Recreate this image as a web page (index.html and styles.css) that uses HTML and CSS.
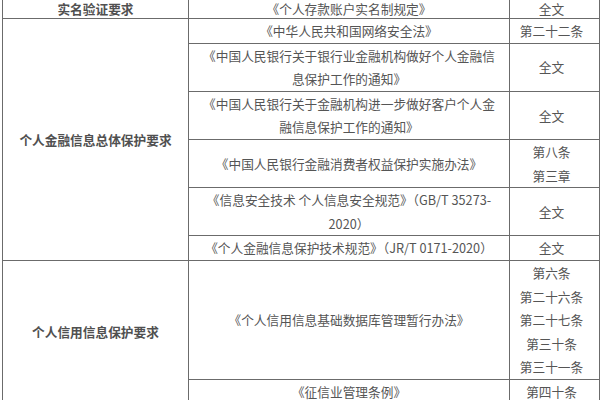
FILE: index.html
```html
<!DOCTYPE html>
<html lang="zh-CN">
<head>
<meta charset="utf-8">
<link rel="stylesheet" href="styles.css">
</head>
<body>
<table class="law-table">
  <colgroup>
    <col class="c-req">
    <col class="c-law">
    <col class="c-art">
  </colgroup>
  <tr class="first-row">
    <td class="req">实名验证要求</td>
    <td class="law">《个人存款账户实名制规定》</td>
    <td class="art">全文</td>
  </tr>
  <tr>
    <td class="req" rowspan="7">个人金融信息总体保护要求</td>
    <td class="law">《中华人民共和国网络安全法》</td>
    <td class="art">第二十二条</td>
  </tr>
  <tr>
    <td class="law">《中国人民银行关于银行业金融机构做好个人金融信<br>息保护工作的通知》</td>
    <td class="art">全文</td>
  </tr>
  <tr>
    <td class="law">《中国人民银行关于金融机构进一步做好客户个人金<br>融信息保护工作的通知》</td>
    <td class="art">全文</td>
  </tr>
  <tr>
    <td class="law">《中国人民银行金融消费者权益保护实施办法》</td>
    <td class="art">第八条<br>第三章</td>
  </tr>
  <tr>
    <td class="law">《信息安全技术 个人信息安全规范》（GB/T 35273-<br>2020）</td>
    <td class="art">全文</td>
  </tr>
  <tr>
    <td class="law">《个人金融信息保护技术规范》（JR/T 0171-2020）</td>
    <td class="art">全文</td>
  </tr>
  <tr class="hidden-row"></tr>
  <tr>
    <td class="req" rowspan="2">个人信用信息保护要求</td>
    <td class="law">《个人信用信息基础数据库管理暂行办法》</td>
    <td class="art">第六条<br>第二十六条<br>第二十七条<br>第三十条<br>第三十一条</td>
  </tr>
  <tr>
    <td class="law">《征信业管理条例》</td>
    <td class="art">第四十条</td>
  </tr>
</table>
</body>
</html>
```

FILE: styles.css
```css
html, body {
  margin: 0;
  padding: 0;
  background: #ffffff;
}

body {
  font-family: "Noto Sans CJK SC", "Noto Sans", sans-serif;
  font-size: 12.7px;
  color: #555555;
  overflow: hidden;
}

.law-table {
  margin: 0 0 0 2px;
  width: 597px;
  border-collapse: collapse;
  table-layout: fixed;
}

.c-req { width: 186px; }
.c-law { width: 321px; }
.c-art { width: 90px; }

.law-table td {
  border: 1px solid #6b6b6b;
  padding: 0 12px;
  line-height: 23.6px;
  text-align: center;
  vertical-align: middle;
}

.law-table td.art {
  padding: 0 6px 0 0;
}

.law-table .first-row td {
  border-top: 0;
  line-height: 18px;
}

.law-table td.req {
  font-weight: 700;
  color: #505050;
}

.hidden-row {
  height: 0;
}
```
